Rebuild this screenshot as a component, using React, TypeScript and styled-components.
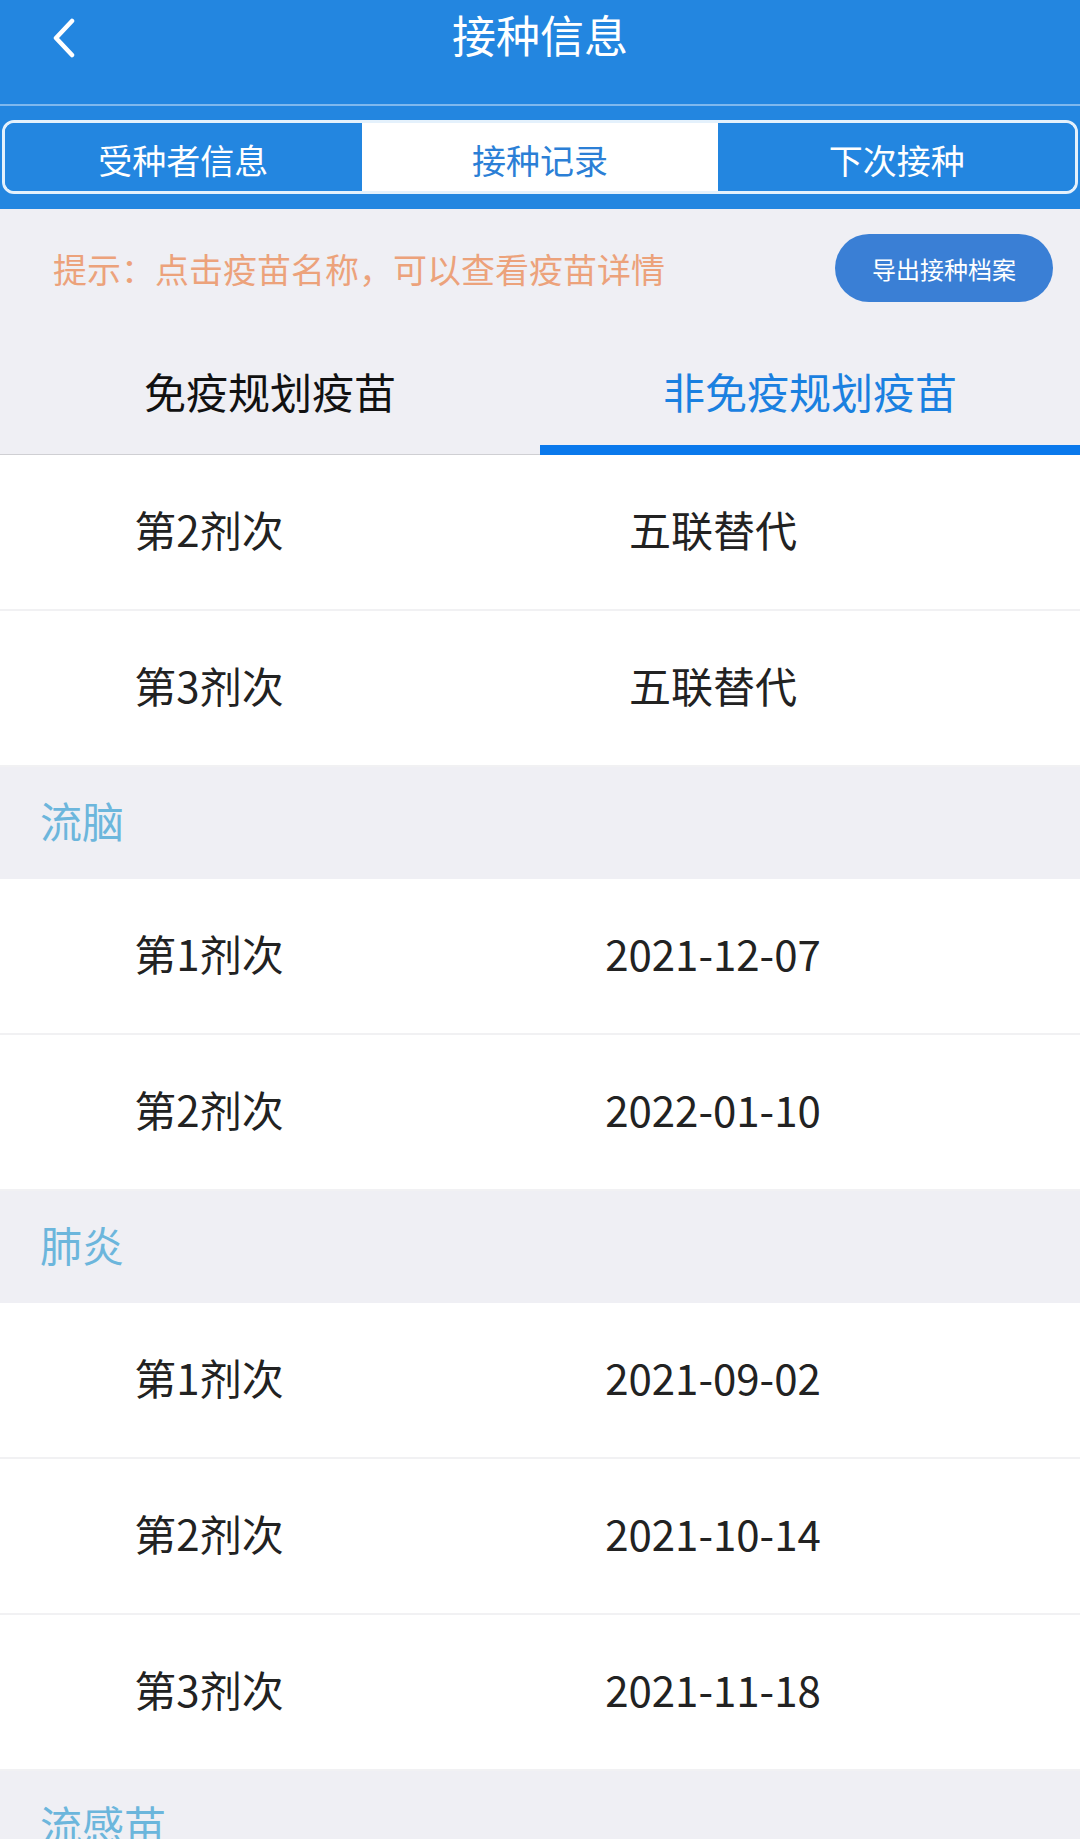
import React from 'react'
import styled, { createGlobalStyle } from 'styled-components'

const GlobalStyle = createGlobalStyle`
  html, body {
    margin: 0;
    padding: 0;
    background: #efeff4;
    overflow: hidden;
  }
  body {
    font-family: "Noto Sans CJK SC", "Noto Sans", sans-serif;
  }
`

const Page = styled.div`
  width: 1080px;
  display: flex;
  flex-flow: column;
  background: #efeff4;
`

const Header = styled.header`
  background: #2386e0;
  display: flex;
  flex-flow: column;
`

const NavBar = styled.div`
  height: 106px;
  display: flex;
  align-items: flex-start;
  justify-content: center;
  position: relative;
  border-bottom: 2px solid #7eb8ee;
  box-sizing: border-box;
`

const Title = styled.h1`
  margin: 0;
  height: 70px;
  line-height: 68px;
  font-size: 44px;
  font-weight: 400;
  color: #fff;
`

const Back = styled.button`
  position: absolute;
  left: 46px;
  top: 14px;
  width: 36px;
  height: 48px;
  padding: 0;
  border: 0;
  background: transparent;
  display: flex;
  align-items: center;
  justify-content: center;
`

const SegmentWrap = styled.div`
  padding: 14px 2px 15px;
`

const Segment = styled.div`
  display: grid;
  grid-template-columns: 1fr 1fr 1fr;
  height: 74px;
  border: 3px solid #e4f1fc;
  border-radius: 12px;
  overflow: hidden;
  box-sizing: border-box;
`

const SegmentItem = styled.div<{ $active?: boolean }>`
  display: flex;
  align-items: center;
  justify-content: center;
  padding-top: 4px;
  font-size: 34px;
  color: ${p => (p.$active ? '#2b7fd6' : '#fff')};
  background: ${p => (p.$active ? '#fff' : '#2386e0')};
`

const HintRow = styled.div`
  height: 118px;
  display: flex;
  align-items: center;
  justify-content: space-between;
  padding: 0 27px 0 53px;
`

const Hint = styled.span`
  font-size: 34px;
  color: #eca27b;
`

const ExportButton = styled.button`
  width: 218px;
  height: 68px;
  border: 0;
  border-radius: 34px;
  background: #3a7fd5;
  color: #fff;
  font-family: inherit;
  font-size: 24px;
  padding: 0;
`

const SubTabs = styled.div`
  display: grid;
  grid-template-columns: 1fr 1fr;
  height: 128px;
`

const SubTab = styled.div<{ $active?: boolean }>`
  display: flex;
  align-items: center;
  justify-content: center;
  font-size: 42px;
  color: ${p => (p.$active ? '#1a80e0' : '#111')};
  border-bottom: ${p => (p.$active ? '10px solid #0a79ec' : '1px solid #cfcfd3')};
  padding-top: ${p => (p.$active ? '8px' : '0')};
`

const GroupHeader = styled.div`
  height: 112px;
  display: flex;
  align-items: center;
  padding: 0 0 8px 40px;
  box-sizing: border-box;
  font-size: 42px;
  color: #6cb6dc;
  background: #efeff4;
`

const Row = styled.div`
  height: 156px;
  display: grid;
  grid-template-columns: 418px 590px 1fr;
  align-items: center;
  padding-bottom: 8px;
  background: #fff;
  border-bottom: 2px solid #f1f1f3;
  box-sizing: border-box;
  font-size: 42px;
  color: #222;
`

const Cell = styled.span`
  text-align: center;
`

interface Dose {
  label: string
  value: string
}

interface Group {
  name?: string
  doses: Dose[]
}

const groups: Group[] = [
  {
    doses: [
      { label: '第2剂次', value: '五联替代' },
      { label: '第3剂次', value: '五联替代' },
    ],
  },
  {
    name: '流脑',
    doses: [
      { label: '第1剂次', value: '2021-12-07' },
      { label: '第2剂次', value: '2022-01-10' },
    ],
  },
  {
    name: '肺炎',
    doses: [
      { label: '第1剂次', value: '2021-09-02' },
      { label: '第2剂次', value: '2021-10-14' },
      { label: '第3剂次', value: '2021-11-18' },
    ],
  },
  {
    name: '流感苗',
    doses: [],
  },
]

const App: React.FC = () => {
  return (
    <Page>
      <GlobalStyle />
      <Header>
        <NavBar>
          <Back aria-label="返回">
            <svg width="26" height="40" viewBox="0 0 26 40" fill="none">
              <path d="M21 3 L5 20 L21 37" stroke="#fff" strokeWidth="4.5" strokeLinecap="round" strokeLinejoin="round" />
            </svg>
          </Back>
          <Title>接种信息</Title>
        </NavBar>
        <SegmentWrap>
          <Segment>
            <SegmentItem>受种者信息</SegmentItem>
            <SegmentItem $active>接种记录</SegmentItem>
            <SegmentItem>下次接种</SegmentItem>
          </Segment>
        </SegmentWrap>
      </Header>

      <HintRow>
        <Hint>提示：点击疫苗名称，可以查看疫苗详情</Hint>
        <ExportButton>导出接种档案</ExportButton>
      </HintRow>

      <SubTabs>
        <SubTab>免疫规划疫苗</SubTab>
        <SubTab $active>非免疫规划疫苗</SubTab>
      </SubTabs>

      {groups.map((g, i) => (
        <React.Fragment key={i}>
          {g.name && <GroupHeader>{g.name}</GroupHeader>}
          {g.doses.map((d, j) => (
            <Row key={j}>
              <Cell>{d.label}</Cell>
              <Cell>{d.value}</Cell>
            </Row>
          ))}
        </React.Fragment>
      ))}
    </Page>
  )
}

export default App
